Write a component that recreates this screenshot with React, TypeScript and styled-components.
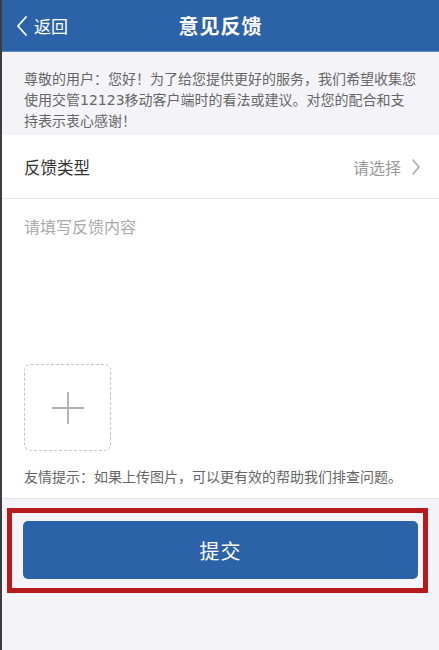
import * as React from 'react';
import styled, { createGlobalStyle } from 'styled-components';

const FONT = `"Noto Sans CJK SC", "Noto Sans", sans-serif`;

const GlobalStyle = createGlobalStyle`
  html, body {
    margin: 0;
    padding: 0;
    background: #f4f4f8;
  }
  body {
    font-family: ${FONT};
  }
`;

/// LAYOUT
/** ******************************************************************* */
const Screen = styled.div`
  width: 439px;
  height: 650px;
  box-sizing: border-box;
  border-left: 2px solid #3d3d3d;
  background: #f4f4f8;
  display: flex;
  flex-direction: column;
  overflow: hidden;
`;

const NavBar = styled.header`
  height: 52px;
  flex-shrink: 0;
  background: #2c62a8;
  border-bottom: 1px solid #5f8cc8;
  box-sizing: border-box;
  display: grid;
  grid-template-columns: 1fr auto 1fr;
  align-items: center;
  color: #fff;
`;

const BackButton = styled.button`
  display: flex;
  align-items: center;
  gap: 5px;
  padding: 0 0 0 13px;
  border: 0;
  background: none;
  color: #fff;
  font-family: ${FONT};
  font-size: 17px;
  cursor: pointer;
  justify-self: start;
`;

const Title = styled.h1`
  margin: 0;
  font-size: 20px;
  font-weight: 700;
  letter-spacing: 1px;
`;

// wide latin digits (DejaVu) so the second line breaks before 持, as on the device
const Notice = styled.p`
  margin: 0;
  padding: 17px 22px 3px 22px;
  font-family: "DejaVu Sans", "Noto Sans CJK SC", sans-serif;
  font-size: 14px;
  line-height: 21px;
  color: #666;
`;

const Form = styled.section`
  background: #fff;
  border-bottom: 1px solid #e6e6ea;
`;

const SelectRow = styled.div`
  height: 63px;
  display: flex;
  align-items: center;
  justify-content: space-between;
  padding: 0 18px 0 22px;
  border-bottom: 1px solid #e8e8e8;
`;

const RowLabel = styled.span`
  font-size: 16.5px;
  color: #333;
`;

const RowValue = styled.span`
  display: flex;
  align-items: center;
  gap: 10px;
  font-size: 16px;
  color: #999;
`;

const Content = styled.textarea`
  display: block;
  box-sizing: border-box;
  width: 100%;
  height: 149px;
  padding: 16px 22px;
  border: 0;
  resize: none;
  outline: none;
  font-family: ${FONT};
  font-size: 16px;
  line-height: 22px;
  color: #333;
  &::placeholder {
    color: #aaa;
  }
`;

const UploadArea = styled.div`
  padding: 16px 22px 0;
`;

const AddBox = styled.button`
  width: 87px;
  height: 87px;
  box-sizing: border-box;
  border: 1.5px dashed #c4c4c4;
  border-radius: 7px;
  background: #fff;
  display: flex;
  align-items: center;
  justify-content: center;
  padding: 0;
  cursor: pointer;
`;

const Hint = styled.p`
  margin: 0;
  padding: 15px 18px 12px 22px;
  font-size: 14px;
  line-height: 20px;
  color: #666;
`;

const Highlight = styled.div`
  margin: 9px 0 0 5px;
  width: 421px;
  box-sizing: border-box;
  border: 5px solid #b8191b;
  padding: 8px 5px 9px 11px;
`;

const SubmitButton = styled.button`
  width: 100%;
  height: 58px;
  border: 0;
  border-radius: 5px;
  background: #2c63a8;
  color: #fff;
  font-family: ${FONT};
  font-size: 20px;
  letter-spacing: 1px;
  cursor: pointer;
`;

/// ICONS
/** ******************************************************************* */
function ChevronLeft() {
  return (
    <svg width="14" height="24" viewBox="0 0 14 24" fill="none">
      <polyline points="11,3 3,12 11,21" stroke="#fff" strokeWidth="1.8" strokeLinecap="round" strokeLinejoin="round" />
    </svg>
  );
}

function ChevronRight() {
  return (
    <svg width="10" height="18" viewBox="0 0 10 18" fill="none">
      <polyline points="2,2 8,9 2,16" stroke="#aaa" strokeWidth="1.6" strokeLinecap="round" strokeLinejoin="round" />
    </svg>
  );
}

function Plus() {
  return (
    <svg width="34" height="34" viewBox="0 0 34 34" fill="none">
      <path d="M17 1v32M1 17h32" stroke="#b0b0b0" strokeWidth="1.8" />
    </svg>
  );
}

/// COMPONENT
/** ******************************************************************* */
export default function App() {
  return (
    <>
      <GlobalStyle />
      <Screen>
        <NavBar>
          <BackButton>
            <ChevronLeft />
            返回
          </BackButton>
          <Title>意见反馈</Title>
          <span />
        </NavBar>
        <Notice>
          尊敬的用户：您好！为了给您提供更好的服务，我们希望收集您使用交管12123移动客户端时的看法或建议。对您的配合和支持表示衷心感谢！
        </Notice>
        <Form>
          <SelectRow>
            <RowLabel>反馈类型</RowLabel>
            <RowValue>
              请选择
              <ChevronRight />
            </RowValue>
          </SelectRow>
          <Content placeholder="请填写反馈内容" />
          <UploadArea>
            <AddBox aria-label="添加图片">
              <Plus />
            </AddBox>
          </UploadArea>
          <Hint>友情提示：如果上传图片，可以更有效的帮助我们排查问题。</Hint>
        </Form>
        <Highlight>
          <SubmitButton>提交</SubmitButton>
        </Highlight>
      </Screen>
    </>
  );
}
